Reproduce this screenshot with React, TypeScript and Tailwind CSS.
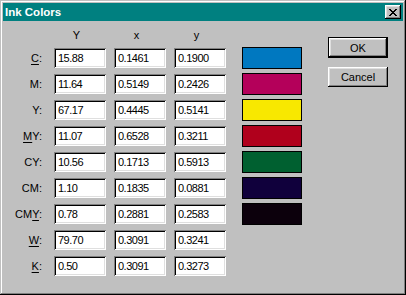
import React from "react";

type Row = { label: string; u: number; Y: string; x: string; y: string; c: string };

const rows: Row[] = [
  { label: "C:", u: 0, Y: "15.88", x: "0.1461", y: "0.1900", c: "#0078c0" },
  { label: "M:", u: -1, Y: "11.64", x: "0.5149", y: "0.2426", c: "#b4005a" },
  { label: "Y:", u: -1, Y: "67.17", x: "0.4445", y: "0.5141", c: "#f8e800" },
  { label: "MY:", u: 0, Y: "11.07", x: "0.6528", y: "0.3211", c: "#b0001c" },
  { label: "CY:", u: -1, Y: "10.56", x: "0.1713", y: "0.5913", c: "#006030" },
  { label: "CM:", u: -1, Y: "1.10", x: "0.1835", y: "0.0881", c: "#10003c" },
  { label: "CMY:", u: 2, Y: "0.78", x: "0.2881", y: "0.2583", c: "#0c000c" },
  { label: "W:", u: 0, Y: "79.70", x: "0.3091", y: "0.3241", c: "" },
  { label: "K:", u: 0, Y: "0.50", x: "0.3091", y: "0.3273", c: "" },
];

function Label({ text, u }: { text: string; u: number }) {
  if (u < 0) return <>{text}</>;
  return (
    <>
      {text.slice(0, u)}
      <span className="underline underline-offset-[2px]">{text[u]}</span>
      {text.slice(u + 1)}
    </>
  );
}

function Field({ value }: { value: string }) {
  return (
    <div className="w-[52px] h-[20px] bg-white flex items-center pl-[4px] pb-[1px] tracking-[-0.5px] shadow-[inset_1px_1px_#808080,inset_-1px_-1px_#fff,inset_2px_2px_#000,inset_-2px_-2px_#dfdfdf]">
      {value}
    </div>
  );
}

export default function App() {
  return (
    <div
      className="w-[406px] h-[295px] bg-[#c0c0c0] p-[3px] flex flex-col text-black text-[11px] leading-[14px] shadow-[inset_-1px_-1px_#000,inset_1px_1px_#c0c0c0,inset_-2px_-2px_#808080,inset_2px_2px_#fff]"
      style={{ fontFamily: '"Liberation Sans", Arial, sans-serif' }}
    >
      <div className="h-[18px] bg-[#008080] flex items-center justify-between pl-[2px] pr-[2px]">
        <span className="text-white font-bold text-[11.5px]">Ink Colors</span>
        <div className="w-[16px] h-[14px] bg-[#c0c0c0] flex items-center justify-center shadow-[inset_-1px_-1px_#000,inset_1px_1px_#fff,inset_-2px_-2px_#808080,inset_2px_2px_#dfdfdf]">
          <svg width="8" height="7" viewBox="0 0 8 7" shapeRendering="crispEdges">
            <path
              fill="#000"
              d="M0 0h2v1h-2zM6 0h2v1h-2zM1 1h2v1h-2zM5 1h2v1h-2zM2 2h4v1h-4zM3 3h2v1h-2zM2 4h4v1h-4zM1 5h2v1h-2zM5 5h2v1h-2zM0 6h2v1h-2zM6 6h2v1h-2z"
            />
          </svg>
        </div>
      </div>
      <div className="flex flex-1">
        <div className="flex flex-col pt-[7px]">
          <div className="flex h-[14px] items-center mb-[6px]">
            <div className="w-[39px]" />
            <div className="ml-[12px] w-[52px] text-center pr-[7px]">Y</div>
            <div className="ml-[8px] w-[52px] text-center pr-[7px]">x</div>
            <div className="ml-[8px] w-[52px] text-center pr-[7px]">y</div>
          </div>
          {rows.map((r) => (
            <div key={r.label} className="flex h-[20px] items-center mb-[6px]">
              <div className="w-[39px] text-right">
                <Label text={r.label} u={r.u} />
              </div>
              <div className="ml-[12px]">
                <Field value={r.Y} />
              </div>
              <div className="ml-[8px]">
                <Field value={r.x} />
              </div>
              <div className="ml-[8px]">
                <Field value={r.y} />
              </div>
              {r.c ? (
                <div className="ml-[16px] w-[60px] h-[22px] border border-black shrink-0" style={{ backgroundColor: r.c }} />
              ) : null}
            </div>
          ))}
        </div>
        <div className="flex flex-col ml-[26px] pt-[16px]">
          <div className="w-[60px] h-[21px] border border-black">
            <div className="w-full h-full flex items-center justify-center shadow-[inset_-1px_-1px_#000,inset_1px_1px_#fff,inset_-2px_-2px_#808080,inset_2px_2px_#dfdfdf]">
              OK
            </div>
          </div>
          <div className="mt-[9px] w-[60px] h-[20px] flex items-center justify-center shadow-[inset_-1px_-1px_#000,inset_1px_1px_#fff,inset_-2px_-2px_#808080,inset_2px_2px_#dfdfdf]">
            Cancel
          </div>
        </div>
      </div>
    </div>
  );
}
